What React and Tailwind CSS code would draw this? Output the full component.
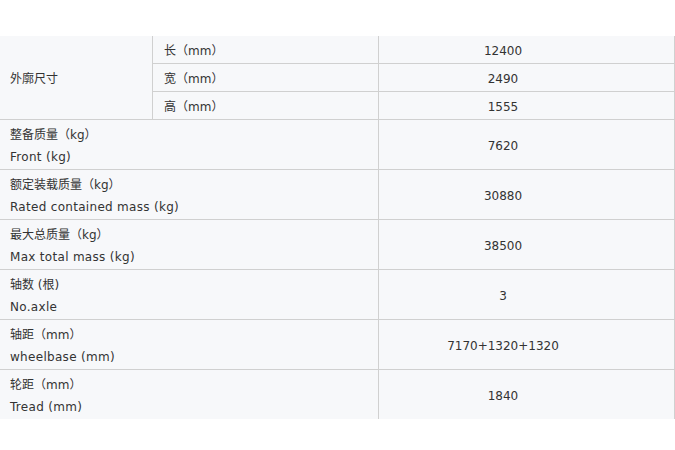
const dims = [
  { label: '长（mm）', value: '12400' },
  { label: '宽（mm）', value: '2490' },
  { label: '高（mm）', value: '1555' },
]

const specs = [
  { cn: '整备质量（kg）', en: 'Front (kg)', value: '7620' },
  { cn: '额定装载质量（kg）', en: 'Rated contained mass (kg)', value: '30880' },
  { cn: '最大总质量（kg）', en: 'Max total mass (kg)', value: '38500' },
  { cn: '轴数 (根)', en: 'No.axle', value: '3' },
  { cn: '轴距（mm）', en: 'wheelbase (mm)', value: '7170+1320+1320' },
  { cn: '轮距（mm）', en: 'Tread (mm)', value: '1840', last: true },
]

export default function App() {
  return (
    <div className="h-[450px] w-[675px] bg-white pt-[36px] font-['DejaVu_Sans','Noto_Sans_CJK_SC',sans-serif] text-[12px] text-[#333]">
      <div className="w-[675px] border-r border-[#d0d0d0] bg-[#f7f8fa]">
        <div className="flex">
          <div className="flex w-[153px] items-center border-b border-r border-[#d0d0d0] pl-[10px] pt-[2px]">外廓尺寸</div>
          <div className="flex flex-1 flex-col">
            {dims.map((d) => (
              <div key={d.label} className="flex h-[28px] border-b border-[#d0d0d0]">
                <div className="flex w-[226px] items-center border-r border-[#d0d0d0] pl-[11px] pt-[2px]">{d.label}</div>
                <div className="flex flex-1 items-center justify-center pr-[47px] pt-[2px]">{d.value}</div>
              </div>
            ))}
          </div>
        </div>
        {specs.map((s) => (
          <div key={s.en} className={s.last ? 'flex h-[49px]' : 'flex h-[50px] border-b border-[#d0d0d0]'}>
            <div className="flex w-[379px] flex-col justify-center border-r border-[#d0d0d0] pl-[10px] pt-[3px] leading-[22px]">
              <div>{s.cn}</div>
              <div className="tracking-[0.3px]">{s.en}</div>
            </div>
            <div className="flex flex-1 items-center justify-center pr-[47px] pt-[2px]">{s.value}</div>
          </div>
        ))}
      </div>
    </div>
  )
}
